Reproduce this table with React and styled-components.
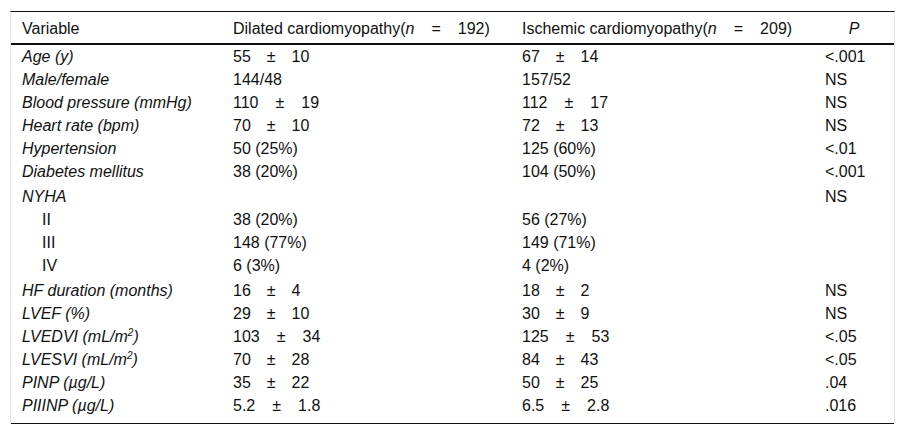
import React from "react";
import styled, { createGlobalStyle } from "styled-components";

const GlobalStyle = createGlobalStyle`
  html, body {
    margin: 0;
    padding: 0;
    background: #fff;
  }
  body {
    font-family: "Liberation Sans", Arial, sans-serif;
    color: #111;
  }
`;

const Frame = styled.div`
  margin: 11px 10px 0;
  border-top: 1px solid #111;
  border-left: 1px solid #e6e6e6;
  border-right: 1px solid #e6e6e6;
`;

const Table = styled.table`
  width: 100%;
  border-collapse: collapse;
  table-layout: fixed;
  font-size: 16px;
  border-bottom: 1px solid #111;
`;

const HeadCell = styled.th`
  font-weight: normal;
  text-align: ${(p) => (p.$center ? "center" : "left")};
  padding: 5px 0 3px ${(p) => (p.$center ? "0" : "11px")};
  line-height: 23px;
  border-bottom: 2px solid #111;
  white-space: nowrap;
`;

const Row = styled.tr`
  & > td {
    padding-top: ${(p) => (p.$spaced ? "2px" : "0")};
  }
  &:last-child > td {
    padding-bottom: 6px;
  }
`;

const Cell = styled.td`
  padding: 0 0 0 11px;
  line-height: 23px;
  white-space: nowrap;
  vertical-align: middle;
`;

const Label = styled(Cell)`
  font-style: ${(p) => (p.$indent ? "normal" : "italic")};
  padding-left: ${(p) => (p.$indent ? "31px" : "11px")};
`;

const Pm = styled.span`
  margin: 0 ${(p) => p.$gap || 16}px;
`;

const Em = styled.i`
  font-style: italic;
`;

const Sup = styled.sup`
  font-size: 10px;
  line-height: 0;
  vertical-align: 6px;
`;

const mean = (a, b, gap) => (
  <>
    {a}
    <Pm $gap={gap}>±</Pm>
    {b}
  </>
);

const rows = [
  { label: "Age (y)", dcm: mean(55, 10), icm: mean(67, 14), p: "<.001" },
  { label: "Male/female", dcm: "144/48", icm: "157/52", p: "NS" },
  { label: "Blood pressure (mmHg)", dcm: mean(110, 19, 17), icm: mean(112, 17, 17), p: "NS" },
  { label: "Heart rate (bpm)", dcm: mean(70, 10), icm: mean(72, 13), p: "NS" },
  { label: "Hypertension", dcm: "50 (25%)", icm: "125 (60%)", p: "<.01" },
  { label: "Diabetes mellitus", dcm: "38 (20%)", icm: "104 (50%)", p: "<.001" },
  { label: "NYHA", dcm: "", icm: "", p: "NS", spaced: true },
  { label: "II", dcm: "38 (20%)", icm: "56 (27%)", p: "", indent: true },
  { label: "III", dcm: "148 (77%)", icm: "149 (71%)", p: "", indent: true },
  { label: "IV", dcm: "6 (3%)", icm: "4 (2%)", p: "", indent: true },
  { label: "HF duration (months)", dcm: mean(16, 4), icm: mean(18, 2), p: "NS", spaced: true },
  { label: "LVEF (%)", dcm: mean(29, 10), icm: mean(30, 9), p: "NS" },
  {
    label: (
      <>
        LVEDVI (mL/m<Sup>2</Sup>)
      </>
    ),
    dcm: mean(103, 34, 17),
    icm: mean(125, 53, 17),
    p: "<.05",
  },
  {
    label: (
      <>
        LVESVI (mL/m<Sup>2</Sup>)
      </>
    ),
    dcm: mean(70, 28),
    icm: mean(84, 43),
    p: "<.05",
  },
  { label: "PINP (µg/L)", dcm: mean(35, 22), icm: mean(50, 25), p: ".04" },
  { label: "PIIINP (µg/L)", dcm: mean("5.2", "1.8", 17), icm: mean("6.5", "2.8", 17), p: ".016" },
];

export default function App() {
  return (
    <>
      <GlobalStyle />
      <Frame>
        <Table>
          <colgroup>
            <col style={{ width: 211 }} />
            <col style={{ width: 289 }} />
            <col style={{ width: 303 }} />
            <col style={{ width: 80 }} />
          </colgroup>
          <thead>
            <tr>
              <HeadCell>Variable</HeadCell>
              <HeadCell>
                Dilated cardiomyopathy(<Em>n</Em>
                <Pm $gap={17}>=</Pm>192)
              </HeadCell>
              <HeadCell>
                Ischemic cardiomyopathy(<Em>n</Em>
                <Pm $gap={17}>=</Pm>209)
              </HeadCell>
              <HeadCell $center>
                <Em>P</Em>
              </HeadCell>
            </tr>
          </thead>
          <tbody>
            {rows.map((r, i) => (
              <Row key={i} $spaced={r.spaced}>
                <Label $indent={r.indent}>{r.label}</Label>
                <Cell>{r.dcm}</Cell>
                <Cell>{r.icm}</Cell>
                <Cell>{r.p}</Cell>
              </Row>
            ))}
          </tbody>
        </Table>
      </Frame>
    </>
  );
}
